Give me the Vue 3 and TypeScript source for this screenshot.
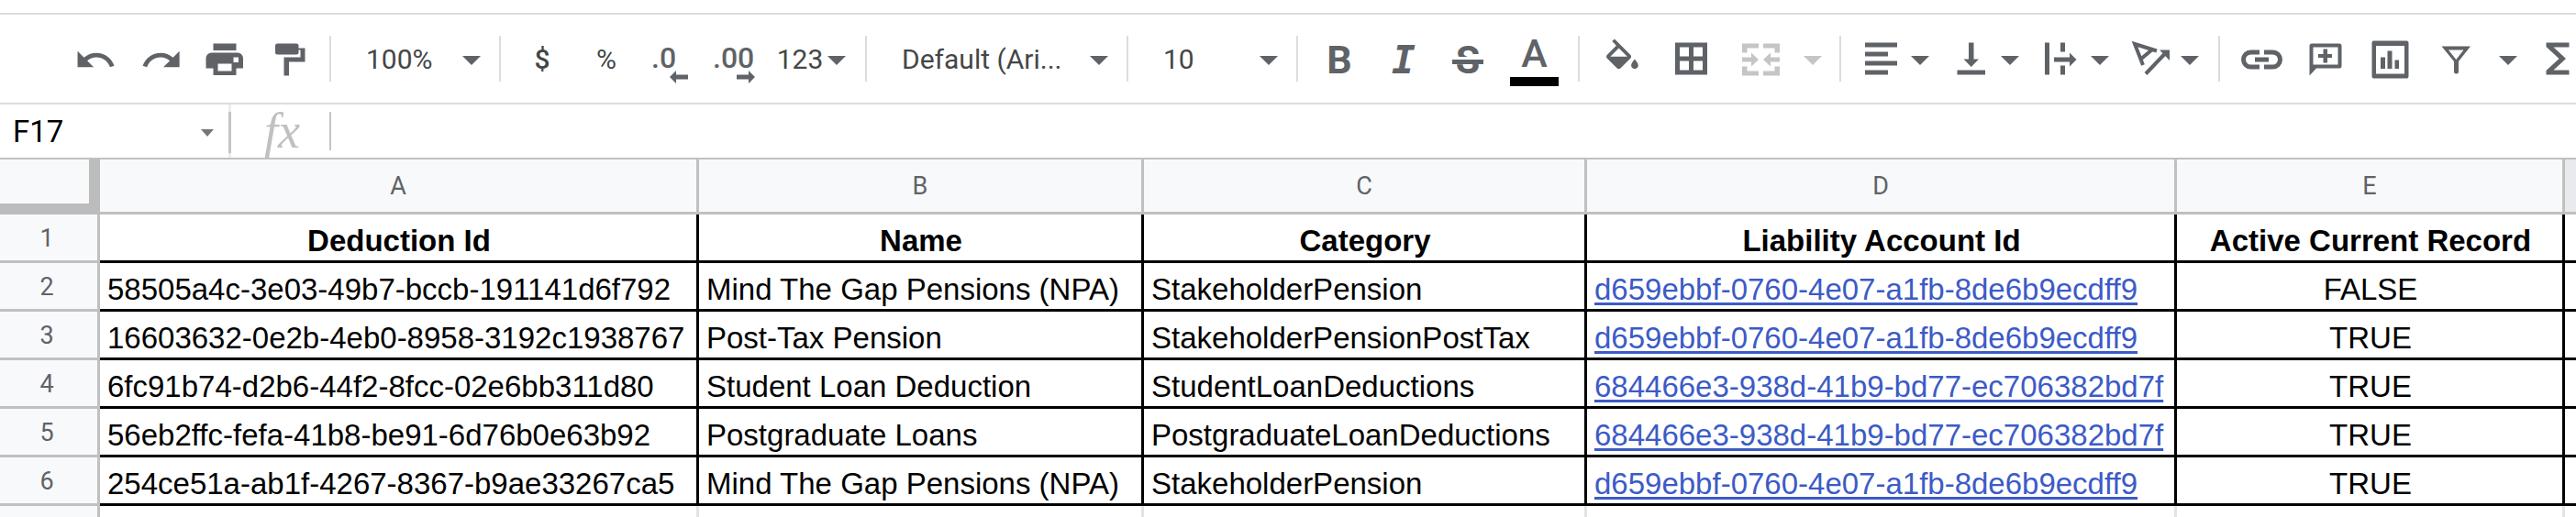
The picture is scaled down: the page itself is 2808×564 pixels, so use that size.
<script setup lang="ts">
import { ref } from 'vue'

interface Icon {
  box: string
  fill?: string
  line?: string
}

const PLAIN = '0 0 45 45'

const icons: Record<string, Icon> = {
  undo: {
    box: '0.7 0 23 23',
    fill: 'M12.5 8c-2.65 0-5.05.99-6.9 2.6L2 7v9h9l-3.62-3.62c1.39-1.16 3.16-1.88 5.12-1.88 3.54 0 6.55 2.31 7.6 5.5l2.37-.78C21.08 11.03 17.15 8 12.5 8z',
  },
  redo: {
    box: '-0.3 0 23 23',
    fill: 'M18.4 10.6C16.55 8.99 14.15 8 11.5 8c-4.65 0-8.58 3.03-9.96 7.22L3.9 16c1.05-3.19 4.05-5.5 7.6-5.5 1.95 0 3.73.72 5.12 1.88L13 16h9V7l-3.6 3.6z',
  },
  print: {
    box: PLAIN,
    fill: 'M10.5 5.5h25V13h-25zM8.500 15.5H37a6 6 0 0 1 6 6v11h-7.500V40h-25v-7.500h-8v-11a6 6 0 0 1 6-6zM15.500 27.500V35.500H30.500V27.500zM32.500 20.500V26h5.500v-5.500z',
  },
  paint: {
    box: PLAIN,
    fill: 'M10.500 5.500H31a2.500 2.500 0 0 1 2.500 2.500v2.500h7v15H23v15h-5.500v-20h18v-8h-2V15a2.500 2.500 0 0 1-2.500 2.500H10.500A2.500 2.500 0 0 1 8 15V8a2.500 2.500 0 0 1 2.500-2.500z',
  },
  fill: {
    box: '0.9 -0.2 23.3 23.3',
    fill: 'M16.56 8.94L7.62 0 6.21 1.41l2.38 2.38-5.15 5.15c-.59.59-.59 1.54 0 2.12l5.5 5.5c.29.29.68.44 1.06.44s.77-.15 1.06-.44l5.5-5.5c.59-.58.59-1.53 0-2.12zM5.21 10L10 5.21 14.79 10H5.21zM19 11.5s-2 2.17-2 3.5c0 1.1.9 2 2 2s2-.9 2-2c0-1.33-2-3.5-2-3.5z',
  },
  borders: {
    box: PLAIN,
    fill: 'M4 4.500h35v35H4zM9 9.500v10h10v-10zM24 9.500v10h10v-10zM9 24.500v10h10v-10zM24 24.500v10h10v-10z',
  },
  merge: {
    box: PLAIN,
    fill: 'M2 5.500h18v5H7.500v5H2zM43 5.500H25v5h12.500v5H43zM2 40.500h18v-5H7.500v-5H2zM43 40.500H25v-5h12.500v-5H43zM2 20.500h10v-5l8 7.500-8 7.500v-5H2zM43 20.500H33v-5L25 23l8 7.500v-5h10z',
  },
  left: {
    box: PLAIN,
    fill: 'M5 4.500h35v5H5zM5 14.500h25v5H5zM5 24.500h35v5H5zM5 34.500h25v5H5z',
  },
  bottom: {
    box: PLAIN,
    fill: 'M7.500 34.500h30.500v5H7.500zM20 4.500h5.500v18H31L22.750 31 14.500 22.500H20z',
  },
  wrap: {
    box: PLAIN,
    fill: 'M5 4.500h5v35H5zM22 4.500h5v10h-5zM22 29.500h5v10h-5zM15 20.500h17v-5l7.500 7.500-7.500 7.500v-5H15z',
  },
  rotate: {
    box: PLAIN,
    fill: 'M32 12.500h11V24z',
    line: 'M29 13.500L5 6l9 23M23.500 12.500L11 23M17 38.500L38 16.500',
  },
  link: {
    box: PLAIN,
    line: 'M20 15h-9.500a8 8 0 0 0 0 16H20M25 15h9.500a8 8 0 0 1 0 16H25M15 23h15',
  },
  comment: {
    box: PLAIN,
    fill: 'M4.500 40.500V8A2.500 2.500 0 0 1 7 5.500h30A2.500 2.500 0 0 1 39.500 8v22a2.500 2.500 0 0 1-2.500 2.500H12zM8.500 9.500v19h27v-19zM19.500 11.500H24V17h5v4h-5v5.500h-4.500V21h-5.500v-4h5.500z',
  },
  chart: {
    box: PLAIN,
    fill: 'M4.500 2.500h36a2 2 0 0 1 2 2v37a2 2 0 0 1-2 2h-36a2 2 0 0 1-2-2v-37a2 2 0 0 1 2-2zM7 8v30.500h31V8zM12 20.500h5V33h-5zM19.500 13.500h5V33h-5zM27.500 23.500h4.500V33h-4.500z',
  },
  filter: {
    box: PLAIN,
    fill: 'M6.500 8.500h31.500L25 25v11a2.500 2.500 0 0 1-5 0V25zM14 12.500L22.300 23 30.500 12.500z',
  },
  sum: {
    box: PLAIN,
    fill: 'M9.500 4.500h25v5H17.500L31 22 17.500 34.500h17v5h-25V35l14-13-14-13z',
  },
}

const history = [
  { icon: 'undo', label: 'Undo' },
  { icon: 'redo', label: 'Redo' },
  { icon: 'print', label: 'Print' },
  { icon: 'paint', label: 'Paint format' },
]

const menus = [
  { icon: 'left', label: 'Horizontal align' },
  { icon: 'bottom', label: 'Vertical align' },
  { icon: 'wrap', label: 'Text wrapping' },
  { icon: 'rotate', label: 'Text rotation' },
]

const inserts = [
  { icon: 'link', label: 'Insert link' },
  { icon: 'comment', label: 'Insert comment' },
  { icon: 'chart', label: 'Insert chart' },
]

const ARROW = 'M0 4h20L10 14z'

const zoom = ref('100%')
const font = ref('Default (Ari...')
const size = ref('10')
const cellName = ref('F17')
const formula = ref('')

const letters = ['A', 'B', 'C', 'D', 'E']
const titles = ['Deduction Id', 'Name', 'Category', 'Liability Account Id', 'Active Current Record']

interface Deduction {
  id: string
  name: string
  category: string
  account: string
  active: boolean
}

const NPA = 'd659ebbf-0760-4e07-a1fb-8de6b9ecdff9'
const LOANS = '684466e3-938d-41b9-bd77-ec706382bd7f'

const rows: Deduction[] = [
  { id: '58505a4c-3e03-49b7-bccb-191141d6f792', name: 'Mind The Gap Pensions (NPA)', category: 'StakeholderPension', account: NPA, active: false },
  { id: '16603632-0e2b-4eb0-8958-3192c1938767', name: 'Post-Tax Pension', category: 'StakeholderPensionPostTax', account: NPA, active: true },
  { id: '6fc91b74-d2b6-44f2-8fcc-02e6bb311d80', name: 'Student Loan Deduction', category: 'StudentLoanDeductions', account: LOANS, active: true },
  { id: '56eb2ffc-fefa-41b8-be91-6d76b0e63b92', name: 'Postgraduate Loans', category: 'PostgraduateLoanDeductions', account: LOANS, active: true },
  { id: '254ce51a-ab1f-4267-8367-b9ae33267ca5', name: 'Mind The Gap Pensions (NPA)', category: 'StakeholderPension', account: NPA, active: true },
]
</script>

<template>
  <main class="app">
    <div class="toolbar" role="toolbar" aria-label="Formatting">
      <div class="group">
        <button v-for="b in history" :key="b.icon" class="tool" :aria-label="b.label">
          <svg class="icon" :viewBox="icons[b.icon].box"><path :d="icons[b.icon].fill" /></svg>
        </button>
      </div>
      <span class="rule"></span>
      <label class="picker">
        <select v-model="zoom" aria-label="Zoom"><option>100%</option></select>
        <svg class="arrow" viewBox="0 0 20 14"><path :d="ARROW" /></svg>
      </label>
      <span class="rule"></span>
      <div class="group">
        <button class="tool strong" aria-label="Format as currency">$</button>
        <button class="tool" aria-label="Format as percent">%</button>
        <button class="tool" aria-label="Decrease decimal places">
          <span class="decimals">.0<svg class="shift" viewBox="0 0 20 14"><path d="M0 7l7-7v4.500h13v5H7V14z" /></svg></span>
        </button>
        <button class="tool" aria-label="Increase decimal places">
          <span class="decimals two">.00<svg class="shift" viewBox="0 0 20 14"><path d="M20 7l-7-7v4.500H0v5h13V14z" /></svg></span>
        </button>
        <button class="formats" aria-label="More formats">
          123<svg class="arrow" viewBox="0 0 20 14"><path :d="ARROW" /></svg>
        </button>
      </div>
      <span class="rule"></span>
      <label class="picker family">
        <select v-model="font" aria-label="Font"><option>Default (Ari...</option></select>
        <svg class="arrow" viewBox="0 0 20 14"><path :d="ARROW" /></svg>
      </label>
      <span class="rule"></span>
      <label class="picker">
        <select v-model="size" aria-label="Font size"><option>10</option></select>
        <svg class="arrow" viewBox="0 0 20 14"><path :d="ARROW" /></svg>
      </label>
      <span class="rule"></span>
      <div class="group">
        <button class="tool letter bold" aria-label="Bold">B</button>
        <button class="tool letter italic" aria-label="Italic">I</button>
        <button class="tool letter bold" aria-label="Strikethrough"><span class="struck">S</span></button>
        <button class="tool wide letter" aria-label="Text color"><span class="ink">A</span></button>
      </div>
      <span class="rule"></span>
      <div class="group">
        <button class="tool wide" aria-label="Fill color">
          <svg class="icon" :viewBox="icons.fill.box"><path :d="icons.fill.fill" /></svg>
        </button>
        <button class="tool wide" aria-label="Borders">
          <svg class="icon" :viewBox="icons.borders.box"><path :d="icons.borders.fill" /></svg>
        </button>
        <button class="tool wide" disabled aria-label="Merge cells">
          <svg class="icon" :viewBox="icons.merge.box"><path :d="icons.merge.fill" /></svg>
        </button>
        <button class="more" disabled aria-label="Merge options">
          <svg class="arrow" viewBox="0 0 20 14"><path :d="ARROW" /></svg>
        </button>
      </div>
      <span class="rule"></span>
      <div class="group spaced">
        <button v-for="b in menus" :key="b.icon" class="menu" :aria-label="b.label">
          <svg class="icon" :viewBox="icons[b.icon].box">
            <path :d="icons[b.icon].fill" />
            <path v-if="icons[b.icon].line" class="line" :d="icons[b.icon].line" />
          </svg>
          <svg class="arrow" viewBox="0 0 20 14"><path :d="ARROW" /></svg>
        </button>
      </div>
      <span class="rule"></span>
      <div class="group">
        <button v-for="b in inserts" :key="b.icon" class="tool" :aria-label="b.label">
          <svg class="icon" :viewBox="icons[b.icon].box">
            <path v-if="icons[b.icon].fill" :d="icons[b.icon].fill" />
            <path v-if="icons[b.icon].line" class="line thick" :d="icons[b.icon].line" />
          </svg>
        </button>
        <button class="tool wide" aria-label="Create a filter">
          <svg class="icon" :viewBox="icons.filter.box"><path :d="icons.filter.fill" /></svg>
        </button>
        <button class="more" aria-label="Filter views">
          <svg class="arrow" viewBox="0 0 20 14"><path :d="ARROW" /></svg>
        </button>
        <button class="tool" aria-label="Functions">
          <svg class="icon" :viewBox="icons.sum.box"><path :d="icons.sum.fill" /></svg>
        </button>
      </div>
    </div>

    <div class="formula-bar">
      <div class="name-box">
        <input v-model="cellName" class="name" aria-label="Name box" />
        <button class="name-more" aria-label="Named ranges">
          <svg viewBox="0 0 14 8"><path d="M0 0h14L7 8z" /></svg>
        </button>
      </div>
      <span class="splitter"></span>
      <label class="fx" for="formula">fx</label>
      <input id="formula" v-model="formula" class="formula" />
    </div>

    <table class="grid">
      <colgroup>
        <col class="c-row" /><col class="c-a" /><col class="c-b" /><col class="c-c" /><col class="c-d" /><col class="c-e" /><col />
      </colgroup>
      <thead>
        <tr>
          <td class="corner"></td>
          <th v-for="l in letters" :key="l" scope="col">{{ l }}</th>
          <th class="current"></th>
        </tr>
      </thead>
      <tbody>
        <tr class="titles">
          <th scope="row">1</th>
          <td v-for="t in titles" :key="t" class="mid">{{ t }}</td>
          <td></td>
        </tr>
        <tr v-for="(r, i) in rows" :key="r.id">
          <th scope="row">{{ i + 2 }}</th>
          <td>{{ r.id }}</td>
          <td>{{ r.name }}</td>
          <td>{{ r.category }}</td>
          <td><a href="#">{{ r.account }}</a></td>
          <td class="mid">{{ r.active ? 'TRUE' : 'FALSE' }}</td>
          <td></td>
        </tr>
        <tr class="empty">
          <th scope="row"></th>
          <td v-for="n in 6" :key="n"></td>
        </tr>
      </tbody>
    </table>
  </main>
</template>

<style>
body {
  margin: 0;
  overflow: hidden;
  background: #fff;
}
</style>

<style scoped>
.app {
  box-sizing: border-box;
  height: 100vh;
  padding-top: 14px;
  overflow: hidden;
  font-family: Roboto, 'Liberation Sans', sans-serif;
}
button,
select,
input {
  margin: 0;
  padding: 0;
  border: 0;
  border-radius: 0;
  outline: 0;
  background: none;
  font: inherit;
  color: inherit;
}
svg {
  display: block;
  flex: none;
}
path {
  fill: currentColor;
  fill-rule: evenodd;
}
.line {
  fill: none;
  stroke: currentColor;
  stroke-width: 4;
}
.thick {
  stroke-width: 5;
}

.toolbar {
  display: flex;
  align-items: center;
  height: 96px;
  padding-left: 69px;
  border-top: 2px solid #dadce0;
  border-bottom: 2px solid #dadce0;
  overflow: hidden;
  color: #444746;
  font-size: 30px;
}
.group {
  display: flex;
  flex: none;
}
.spaced {
  gap: 1px;
}
.rule {
  flex: none;
  width: 2px;
  height: 50px;
  margin: 0 10px;
  background: #dadce0;
}
.tool,
.menu,
.more,
.formats {
  display: flex;
  flex: none;
  align-items: center;
  justify-content: center;
  height: 60px;
}
.tool {
  width: 70px;
}
.tool.wide {
  width: 75px;
}
.menu {
  gap: 10px;
  width: 97px;
}
.more {
  width: 38px;
}
.formats {
  gap: 5px;
  width: 97px;
}
.strong {
  font-weight: 500;
}
.icon {
  width: 45px;
  height: 45px;
  color: #5f6368;
}
.arrow {
  width: 20px;
  height: 14px;
  color: #5f6368;
}
button:disabled svg {
  color: #c4c5c6;
}
.picker {
  display: grid;
  flex: none;
  align-items: center;
  width: 163px;
}
.picker.family {
  width: 263px;
}
.picker > * {
  grid-area: 1 / 1;
}
.picker select {
  width: 100%;
  height: 60px;
  padding: 0 28px;
  appearance: none;
}
.picker .arrow {
  justify-self: end;
  margin-right: 10px;
  pointer-events: none;
}
.decimals {
  display: flex;
  flex-direction: column;
  width: 42px;
  padding-top: 12px;
  color: #5f6368;
  font-size: 32px;
  font-weight: 500;
  line-height: 28px;
  text-align: left;
}
.decimals.two {
  width: 48px;
}
.shift {
  align-self: flex-end;
  width: 20px;
  height: 14px;
  margin-right: 2px;
}
.letter {
  color: #5f6368;
  font-size: 43px;
  font-weight: 500;
  line-height: 45px;
}
.bold {
  padding-top: 2px;
  font-weight: 700;
}
.italic {
  padding-top: 2px;
  font-family: 'DejaVu Sans Mono', monospace;
  font-style: italic;
  font-weight: 700;
}
.struck {
  position: relative;
}
.struck::after {
  position: absolute;
  top: 19px;
  right: -4px;
  left: -4px;
  height: 5px;
  border-top: 3px solid #fff;
  background: #5f6368;
  content: '';
}
.ink {
  width: 53px;
  padding: 2px 0 3px;
  border-bottom: 10px solid #000;
}

.formula-bar {
  display: flex;
  align-items: center;
  height: 58px;
  border-bottom: 2px solid #c0c0c0;
}
.name-box {
  display: flex;
  align-items: center;
  width: 249px;
}
.name {
  flex: 1;
  min-width: 0;
  padding-left: 14px;
  color: #000;
  font-size: 33px;
}
.name-more {
  padding: 4px 16px 0 0;
  color: #777;
}
.name-more svg {
  width: 14px;
  height: 8px;
}
.splitter {
  width: 3px;
  height: 45px;
  border: solid #ececec;
  border-width: 8px 0 5px;
  background: #c4c4c4;
  background-clip: padding-box;
}
.fx {
  width: 71px;
  padding-left: 36px;
  color: #c0c0c0;
  font-family: 'Liberation Serif', serif;
  font-size: 54px;
  font-style: italic;
  line-height: 56px;
}
.formula {
  flex: 1;
  min-width: 0;
  height: 42px;
  padding-left: 12px;
  border-left: 2px solid #c4c4c4;
  font-size: 33px;
}

.grid {
  width: 100%;
  table-layout: fixed;
  border-collapse: separate;
  border-spacing: 0;
}
.c-row {
  width: 109px;
}
.c-a {
  width: 653px;
}
.c-b {
  width: 485px;
}
.c-c {
  width: 483px;
}
.c-d {
  width: 643px;
}
.c-e {
  width: 423px;
}
th {
  padding: 0;
  border: solid #c0c0c0;
  border-width: 0 3px 3px 0;
  background: #f8f9fa;
  color: #5f6368;
  font-size: 27px;
  font-weight: 400;
}
thead th {
  height: 57px;
}
.corner {
  height: 48px;
  padding: 0;
  border: solid #bcbcbc;
  border-width: 0 12px 12px 0;
  background: #f8f9fa;
}
th.current {
  border-right: 0;
  background: #e8eaed;
}
tbody th {
  padding: 2px 4px 0 0;
}
tbody td {
  height: 43px;
  padding: 7px 0 0 8px;
  border: solid #000;
  border-width: 0 3px 3px 0;
  color: #000;
  font-family: 'Liberation Sans', Arial, sans-serif;
  font-size: 33px;
  line-height: 43px;
  white-space: nowrap;
}
tbody td.mid {
  padding: 7px 0 0 2px;
  text-align: center;
}
tbody td:last-child {
  border-right: 0;
}
.titles td {
  font-weight: 700;
}
.empty td {
  border-color: #e2e3e3;
}
a {
  color: #3c5bc6;
  text-decoration: underline 3px;
  text-decoration-skip-ink: none;
  text-underline-offset: 3px;
}
</style>
